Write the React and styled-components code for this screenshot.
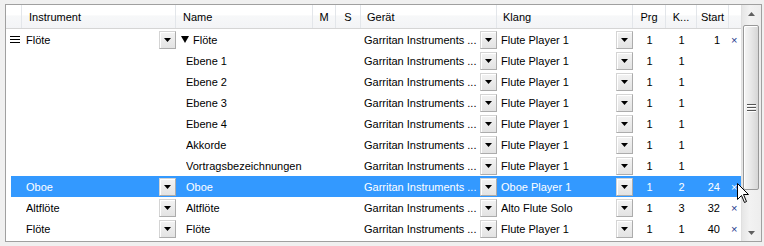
import React from "react";
import styled, { createGlobalStyle, css } from "styled-components";

const Global = createGlobalStyle`
  html, body { margin: 0; padding: 0; background: #f0f0f0; }
  body { font-family: "Liberation Sans", Arial, sans-serif; font-size: 11px; color: #000; }
`;

const COLS = "16px 154px 137px 23px 25px 136px 136px 33px 31px 32px 12px";
const BLUE = "#3399ff";

const Page = styled.div`
  padding: 4px 0 0 5px;
  width: 764px;
  height: 246px;
  box-sizing: border-box;
`;

const Frame = styled.div`
  position: relative;
  width: 757px;
  height: 238px;
  box-sizing: border-box;
  border: 1px solid #a0a0a0;
  background: #fff;
  display: flex;
`;

const Table = styled.div`
  flex: 1;
  display: flex;
  flex-direction: column;
`;

const Header = styled.div`
  display: grid;
  grid-template-columns: ${COLS};
  height: 23px;
  border-bottom: 1px solid #d5d5d5;
  background: linear-gradient(#ffffff 0%, #ffffff 45%, #f7f8f9 46%, #f3f4f6 100%);
`;

const HeadCell = styled.div`
  display: flex;
  align-items: center;
  padding-left: ${(p) => p.$pl ?? 7}px;
  justify-content: ${(p) => (p.$center ? "center" : "flex-start")};
  border-right: ${(p) => (p.$noSep ? "none" : "1px solid #e3e6ea")};
  white-space: nowrap;
  overflow: hidden;
`;

const Row = styled.div`
  display: grid;
  grid-template-columns: ${COLS};
  height: 21px;
  color: ${(p) => (p.$sel ? "#fff" : "#000")};
  background: ${(p) =>
    p.$sel ? `linear-gradient(to right, #fff 5px, ${BLUE} 5px)` : "#fff"};
`;

const Cell = styled.div`
  display: flex;
  align-items: center;
  padding-left: ${(p) => p.$pl ?? 0}px;
  padding-right: ${(p) => p.$pr ?? 0}px;
  justify-content: ${(p) =>
    p.$align === "center" ? "center" : p.$align === "right" ? "flex-end" : "flex-start"};
  white-space: nowrap;
  overflow: hidden;
  min-width: 0;
`;

const Text = styled.span`
  flex: 1;
  overflow: hidden;
  white-space: nowrap;
`;

const DropBtn = styled.span`
  flex: none;
  width: 17px;
  height: 18px;
  box-sizing: border-box;
  border: 1px solid #acacac;
  border-top-color: #d4d4d4;
  border-left-color: #d4d4d4;
  background: linear-gradient(#f3f3f3, #e3e3e3);
  box-shadow: inset 1px 1px 0 #fff;
  display: flex;
  align-items: center;
  justify-content: center;
  padding-top: 1px;
  ${(p) =>
    p.$empty &&
    css`
      visibility: hidden;
    `}
`;

const Close = styled.span`
  font-size: 11px;
  color: ${(p) => (p.$sel ? "#fff" : "#1e3a8c")};
  padding-left: 2px;
`;

const ScrollBar = styled.div`
  width: 20px;
  display: flex;
  flex-direction: column;
  background: linear-gradient(to right, #e6e6e6, #f2f2f2 40%, #ededed);
  border-left: 1px solid #e0e0e0;
`;

const ScrollArrow = styled.div`
  height: 17px;
  display: flex;
  align-items: center;
  justify-content: center;
`;

const Track = styled.div`
  flex: 1;
  display: flex;
  flex-direction: column;
  padding: 3px 2px 0 1px;
`;

const Thumb = styled.div`
  height: 165px;
  box-sizing: border-box;
  border: 1px solid #989898;
  border-radius: 2px;
  background: linear-gradient(to right, #f6f6f6, #e8e8e8 50%, #d6d6d6);
  box-shadow: inset 1px 1px 0 #fff;
  display: flex;
  align-items: center;
  justify-content: center;
`;

const Cursor = styled.svg`
  position: absolute;
  left: 731px;
  top: 178px;
`;

const Arrow = ({ color = "#000", up }) => (
  <svg width="7" height="4" viewBox="0 0 7 4">
    {up ? (
      <polygon points="0,4 7,4 3.5,0" fill={color} />
    ) : (
      <polygon points="0,0 7,0 3.5,4" fill={color} />
    )}
  </svg>
);

const Handle = () => (
  <svg width="10" height="8" viewBox="0 0 10 8">
    <rect x="0" y="0" width="10" height="1" fill="#000" />
    <rect x="0" y="3" width="10" height="1" fill="#000" />
    <rect x="0" y="6" width="10" height="1" fill="#000" />
  </svg>
);

const TreeArrow = styled.span`
  display: inline-flex;
  margin-right: 4px;
`;

const Grip = () => (
  <svg width="9" height="8" viewBox="0 0 9 8">
    <rect x="0" y="0" width="9" height="1" fill="#555" />
    <rect x="0" y="3" width="9" height="1" fill="#555" />
    <rect x="0" y="6" width="9" height="1" fill="#555" />
    <rect x="0" y="1" width="9" height="1" fill="#fff" />
    <rect x="0" y="4" width="9" height="1" fill="#fff" />
    <rect x="0" y="7" width="9" height="1" fill="#fff" />
  </svg>
);

const DEV = "Garritan Instruments ...";
const rows = [
  { handle: true, inst: "Flöte", name: "Flöte", tree: true, sound: "Flute Player 1", prg: "1", k: "1", start: "1", x: true },
  { name: "Ebene 1", sound: "Flute Player 1", prg: "1", k: "1" },
  { name: "Ebene 2", sound: "Flute Player 1", prg: "1", k: "1" },
  { name: "Ebene 3", sound: "Flute Player 1", prg: "1", k: "1" },
  { name: "Ebene 4", sound: "Flute Player 1", prg: "1", k: "1" },
  { name: "Akkorde", sound: "Flute Player 1", prg: "1", k: "1" },
  { name: "Vortragsbezeichnungen", sound: "Flute Player 1", prg: "1", k: "1" },
  { inst: "Oboe", name: "Oboe", sound: "Oboe Player 1", prg: "1", k: "2", start: "24", x: true, sel: true },
  { inst: "Altflöte", name: "Altflöte", sound: "Alto Flute Solo", prg: "1", k: "3", start: "32", x: true },
  { inst: "Flöte", name: "Flöte", sound: "Flute Player 1", prg: "1", k: "1", start: "40", x: true },
];

export default function App() {
  return (
    <Page>
      <Global />
      <Frame>
        <Table>
          <Header>
            <HeadCell />
            <HeadCell>Instrument</HeadCell>
            <HeadCell>Name</HeadCell>
            <HeadCell $center $pl={0}>M</HeadCell>
            <HeadCell $center $pl={0}>S</HeadCell>
            <HeadCell $pl={6}>Gerät</HeadCell>
            <HeadCell $pl={6}>Klang</HeadCell>
            <HeadCell $center $pl={0}>Prg</HeadCell>
            <HeadCell $center $pl={0}>K...</HeadCell>
            <HeadCell $center $pl={0}>Start</HeadCell>
            <HeadCell $noSep />
          </Header>
          {rows.map((r, i) => (
            <Row key={i} $sel={r.sel}>
              <Cell $pl={4}>{r.handle && <Handle />}</Cell>
              <Cell $pl={4}>
                <Text>{r.inst}</Text>
                {r.inst && (
                  <DropBtn>
                    <Arrow />
                  </DropBtn>
                )}
              </Cell>
              <Cell $pl={r.tree ? 5 : 10}>
                {r.tree && (
                  <TreeArrow>
                    <svg width="8" height="7" viewBox="0 0 8 7">
                      <polygon points="0,0 8,0 4,7" fill="#000" />
                    </svg>
                  </TreeArrow>
                )}
                <Text>{r.name}</Text>
              </Cell>
              <Cell />
              <Cell />
              <Cell $pl={3}>
                <Text>{DEV}</Text>
                <DropBtn>
                  <Arrow />
                </DropBtn>
              </Cell>
              <Cell $pl={4}>
                <Text>{r.sound}</Text>
                <DropBtn>
                  <Arrow />
                </DropBtn>
              </Cell>
              <Cell $align="center">{r.prg}</Cell>
              <Cell $align="center">{r.k}</Cell>
              <Cell $align="right" $pr={9}>{r.start}</Cell>
              <Cell>{r.x && <Close $sel={r.sel}>×</Close>}</Cell>
            </Row>
          ))}
        </Table>
        <ScrollBar>
          <ScrollArrow>
            <Arrow up color="#606060" />
          </ScrollArrow>
          <Track>
            <Thumb>
              <Grip />
            </Thumb>
          </Track>
          <ScrollArrow>
            <Arrow color="#606060" />
          </ScrollArrow>
        </ScrollBar>
        <Cursor width="13" height="21" viewBox="0 0 13 21">
          <path
            d="M0.5,0.5 L0.5,16.5 L4.5,12.5 L7.5,19.5 L9.5,18.5 L6.5,11.5 L11.5,11.5 Z"
            fill="#fff"
            stroke="#000"
            strokeWidth="1"
          />
        </Cursor>
      </Frame>
    </Page>
  );
}
